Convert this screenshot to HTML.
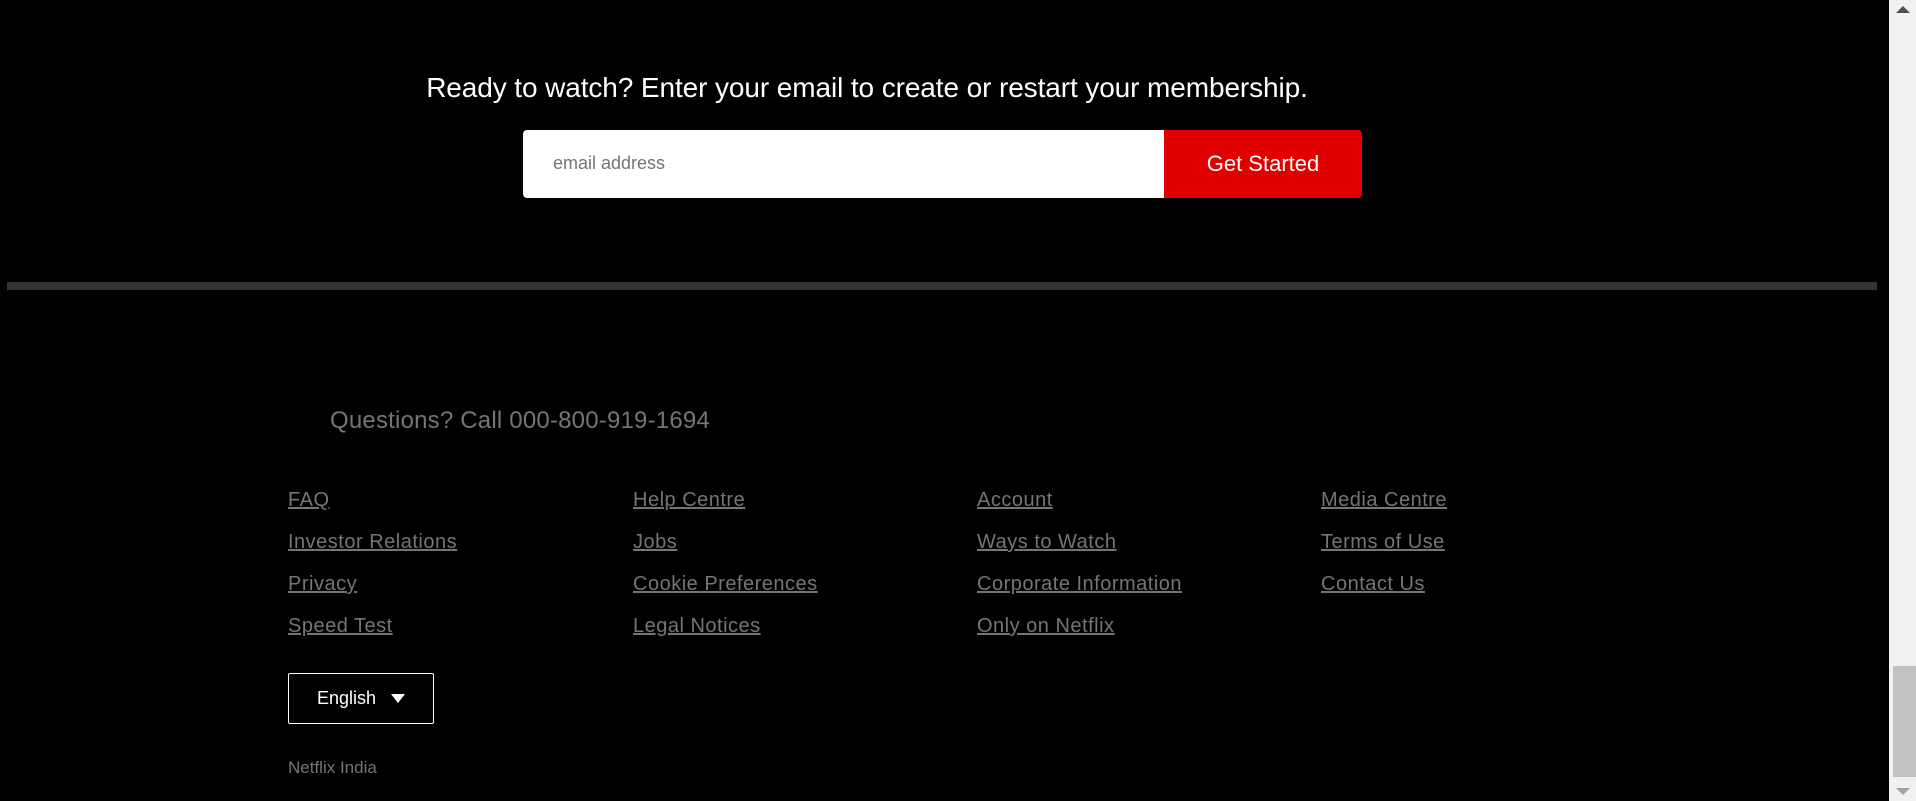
<!DOCTYPE html>
<html><head><meta charset="utf-8"><style>
html,body{margin:0;padding:0;background:#000;width:1916px;height:801px;overflow:hidden;position:relative;font-family:"Liberation Sans",sans-serif}
.a{position:absolute;white-space:nowrap}
h1{position:absolute;margin:0;left:420px;top:72px;font-size:28px;font-weight:normal;color:#fff;width:894px;text-align:center;letter-spacing:-0.1px}
.in{position:absolute;left:523px;top:130px;width:641px;height:68px;background:#fff;border-radius:4px 0 0 4px}
.in span{position:absolute;left:30px;top:23px;font-size:18px;color:#757575}
.btn{position:absolute;left:1164px;top:130px;width:198px;height:68px;background:#e00000;border-radius:0 4px 4px 0;color:#fff;font-size:22px;text-align:center;line-height:68px}
.div{position:absolute;left:7px;top:282px;width:1870px;height:8px;background:#333}
.q{left:330px;top:407px;font-size:24px;color:#757575;letter-spacing:0.2px}
.l{font-size:20px;color:#757575;text-decoration:underline;letter-spacing:0.5px}
.lang{position:absolute;left:288px;top:673px;width:144px;height:49px;border:1px solid #fff;border-radius:2px;color:#fff;font-size:18px}
.lang span{position:absolute;left:28px;top:14px}
.ni{left:288px;top:758px;font-size:17px;color:#757575}
.sb{position:absolute;left:1889px;top:0;width:27px;height:801px;background:#f1f1f1}
.th{position:absolute;left:1893px;top:666px;width:23px;height:111px;background:#c1c1c1}
</style></head><body>
<h1>Ready to watch? Enter your email to create or restart your membership.</h1>
<div class="in"><span>email address</span></div>
<div class="btn">Get Started</div>
<div class="div"></div>
<div class="a q">Questions? Call 000-800-919-1694</div>
<div class="a l" style="left:288px;top:489px">FAQ</div>
<div class="a l" style="left:288px;top:531px">Investor Relations</div>
<div class="a l" style="left:288px;top:573px">Privacy</div>
<div class="a l" style="left:288px;top:615px">Speed Test</div>
<div class="a l" style="left:633px;top:489px">Help Centre</div>
<div class="a l" style="left:633px;top:531px">Jobs</div>
<div class="a l" style="left:633px;top:573px">Cookie Preferences</div>
<div class="a l" style="left:633px;top:615px">Legal Notices</div>
<div class="a l" style="left:977px;top:489px">Account</div>
<div class="a l" style="left:977px;top:531px">Ways to Watch</div>
<div class="a l" style="left:977px;top:573px">Corporate Information</div>
<div class="a l" style="left:977px;top:615px">Only on Netflix</div>
<div class="a l" style="left:1321px;top:489px">Media Centre</div>
<div class="a l" style="left:1321px;top:531px">Terms of Use</div>
<div class="a l" style="left:1321px;top:573px">Contact Us</div>
<div class="lang"><span>English</span><svg style="position:absolute;left:102px;top:20px" width="14" height="9"><path d="M0 0H14L7 9Z" fill="#fff"/></svg></div>
<div class="a ni">Netflix India</div>
<div class="sb"></div><div class="th"></div>
<svg style="position:absolute;left:1896px;top:6px" width="14" height="7"><path d="M0 7L7 0L14 7Z" fill="#505050"/></svg>
<svg style="position:absolute;left:1896px;top:788px" width="14" height="7"><path d="M0 0H14L7 7Z" fill="#a3a3a3"/></svg>
</body></html>
